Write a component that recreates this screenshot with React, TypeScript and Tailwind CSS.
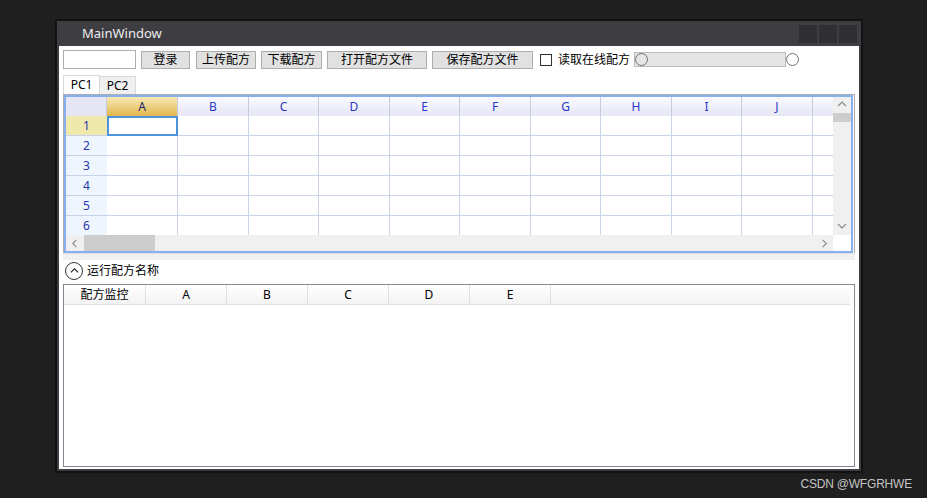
import React from 'react';

const font = "font-['Noto_Sans','Noto_Sans_CJK_SC',sans-serif]";

const cols = ['A', 'B', 'C', 'D', 'E', 'F', 'G', 'H', 'I', 'J', ''];
const colW = [71, 71, 70, 71, 70, 71, 70, 71, 70, 71, 40];
const rows = [1, 2, 3, 4, 5, 6];

function Chevron({ dir, className }: { dir: 'up' | 'down' | 'left' | 'right'; className?: string }) {
  const d = {
    up: 'M2 7 L6 3 L10 7',
    down: 'M2 4 L6 8 L10 4',
    left: 'M7 2 L3 6 L7 10',
    right: 'M4 2 L8 6 L4 10',
  }[dir];
  return (
    <svg viewBox="0 0 12 12" className={className} fill="none" stroke="currentColor" strokeWidth={1.2}>
      <path d={d} />
    </svg>
  );
}

function ToolButton({ label, width, ml }: { label: string; width: string; ml: string }) {
  return (
    <button
      className={`${width} ${ml} h-[18px] bg-[#e1e1e1] border border-[#adadad] text-[12px] leading-none text-black flex items-center justify-center`}
    >
      {label}
    </button>
  );
}

function SheetGrid() {
  return (
    <div className="border border-[#acacac] border-b-0 mx-[4px]">
      <div className="border-2 border-[#86b0f0] mr-[1px] flex flex-col">
        <div className="flex h-[138px]">
          {/* cells */}
          <div className="w-[769px] overflow-hidden">
            <div className="flex h-[19px]">
              <div className="w-[41px] shrink-0 bg-[#e6e6f6] border-r border-[#c4cde0]" />
              {cols.map((c, i) => (
                <div
                  key={i}
                  style={{ width: colW[i] }}
                  className={
                    'shrink-0 flex items-center justify-center text-[12px] border-r border-[#c4cde0] ' +
                    (i === 0
                      ? 'bg-gradient-to-b from-[#f6eab4] to-[#e1b647] text-[#22226e]'
                      : 'bg-gradient-to-b from-[#fafaff] to-[#e6e6f6] text-[#2a36c4]')
                  }
                >
                  {c}
                </div>
              ))}
            </div>
            {rows.map((r) => (
              <div key={r} className="flex h-[20px]">
                <div
                  className={
                    'w-[41px] shrink-0 flex items-center justify-center text-[12px] text-[#2a36b0] border-b border-[#c4d4e8] ' +
                    (r === 1 ? 'bg-[#f0e9ad]' : 'bg-[#eef5fd]')
                  }
                >
                  {r}
                </div>
                {cols.map((c, i) =>
                  r === 1 && i === 0 ? (
                    <div key={i} style={{ width: colW[i] }} className="shrink-0 border-2 border-[#4b93dc] bg-white" />
                  ) : (
                    <div key={i} style={{ width: colW[i] }} className="shrink-0 border-r border-b border-[#c9d5e6] bg-white" />
                  )
                )}
              </div>
            ))}
          </div>
          {/* vertical scrollbar */}
          <div className="w-[18px] bg-[#f0f0f0] flex flex-col items-center">
            <Chevron dir="up" className="w-[12px] h-[12px] mt-[2px] text-[#8a8a8a]" />
            <div className="w-[18px] h-[9px] bg-[#cdcdcd] mt-[2px]" />
            <div className="flex-1" />
            <Chevron dir="down" className="w-[12px] h-[12px] mb-[3px] text-[#8a8a8a]" />
          </div>
        </div>
        {/* horizontal scrollbar */}
        <div className="flex h-[16px]">
          <div className="w-[769px] bg-[#f0f0f0] flex items-center">
            <div className="w-[18px] flex justify-center">
              <Chevron dir="left" className="w-[11px] h-[11px] text-[#8a8a8a]" />
            </div>
            <div className="w-[71px] h-[16px] bg-[#cdcdcd]" />
            <div className="flex-1" />
            <div className="w-[18px] flex justify-center">
              <Chevron dir="right" className="w-[11px] h-[11px] text-[#8a8a8a]" />
            </div>
          </div>
          <div className="w-[18px] bg-white" />
        </div>
      </div>
    </div>
  );
}

function MonitorGrid() {
  const head = ['配方监控', 'A', 'B', 'C', 'D', 'E'];
  return (
    <div className="mx-[4px] mt-[2px] h-[183px] border border-[#828790] bg-white">
      <div className="flex h-[20px] mr-[4px] bg-gradient-to-b from-white to-[#f3f3f3] border-b border-[#e3e3e3]">
        {head.map((h, i) => (
          <div
            key={h}
            className={`${i === 0 ? 'w-[82px]' : 'w-[81px]'} shrink-0 flex items-center justify-center text-[12px] text-black border-r border-[#e0e0e0]`}
          >
            {h}
          </div>
        ))}
        <div className="flex-1" />
      </div>
    </div>
  );
}

export default function App() {
  return (
    <div className={`w-[927px] h-[498px] bg-[#1f1f1f] pt-[19px] pl-[55px] ${font}`}>
      <div className="w-[808px] h-[454px] border-2 border-[#121212] bg-[#3e3e42] flex flex-col">
        {/* title bar */}
        <div className="h-[25px] flex items-center pl-[25px] pr-[4px]">
          <span className="text-[13px] text-[#ececec]">MainWindow</span>
          <div className="flex-1" />
          <div className="flex gap-[2px]">
            <div className="w-[18px] h-[18px] bg-[#2f2f33]" />
            <div className="w-[18px] h-[18px] bg-[#2f2f33]" />
            <div className="w-[18px] h-[18px] bg-[#2f2f33]" />
          </div>
        </div>

        {/* content */}
        <div className="flex-1 bg-white mx-[2px] mb-[2px] flex flex-col">
          {/* toolbar */}
          <div className="flex items-center mt-[4px] pl-[4px] h-[19px]">
            <div className="w-[73px] h-[19px] border border-[#abadb3] bg-white" />
            <ToolButton label="登录" width="w-[49px]" ml="ml-[5px]" />
            <ToolButton label="上传配方" width="w-[60px]" ml="ml-[6px]" />
            <ToolButton label="下载配方" width="w-[61px]" ml="ml-[5px]" />
            <ToolButton label="打开配方文件" width="w-[100px]" ml="ml-[5px]" />
            <ToolButton label="保存配方文件" width="w-[101px]" ml="ml-[5px]" />
            <div className="ml-[7px] w-[12px] h-[12px] border border-[#333] bg-white" />
            <span className="ml-[6px] text-[12px] text-black">读取在线配方</span>
            <div className="ml-[4px] w-[152px] h-[15px] bg-[#e6e6e6] border border-[#bcbcbc] flex items-center">
              <div className="w-[13px] h-[13px] rounded-full border border-[#707070] bg-[#e6e6e6]" />
            </div>
            <div className="w-[13px] h-[13px] rounded-full border border-[#707070] bg-white" />
          </div>

          {/* tabs */}
          <div className="flex mt-[6px] pl-[4px] h-[19px] items-end">
            <div className="w-[37px] h-[19px] bg-white border border-b-0 border-[#d9d9d9] flex items-center justify-center text-[12px] text-black">
              PC1
            </div>
            <div className="w-[36px] h-[18px] bg-[#f0f0f0] border border-b-0 border-l-0 border-[#d9d9d9] flex items-center justify-center text-[12px] text-black">
              PC2
            </div>
          </div>

          <SheetGrid />
          <div className="h-[7px] mx-[4px] bg-[#f0f0f0] border-t border-[#e0e0e0]" />

          {/* expander */}
          <div className="flex items-center h-[22px] pl-[6px]">
            <div className="w-[18px] h-[18px] rounded-full border border-[#333] flex items-center justify-center">
              <Chevron dir="up" className="w-[11px] h-[11px] text-[#222]" />
            </div>
            <span className="ml-[4px] text-[12px] text-black">运行配方名称</span>
          </div>

          <MonitorGrid />
        </div>
      </div>
      <div className="w-[857px] text-right text-[12px] text-[#c4c4c4] mt-[2px] font-['Liberation_Sans',sans-serif] tracking-[-0.2px]">
        CSDN @WFGRHWE
      </div>
    </div>
  );
}
